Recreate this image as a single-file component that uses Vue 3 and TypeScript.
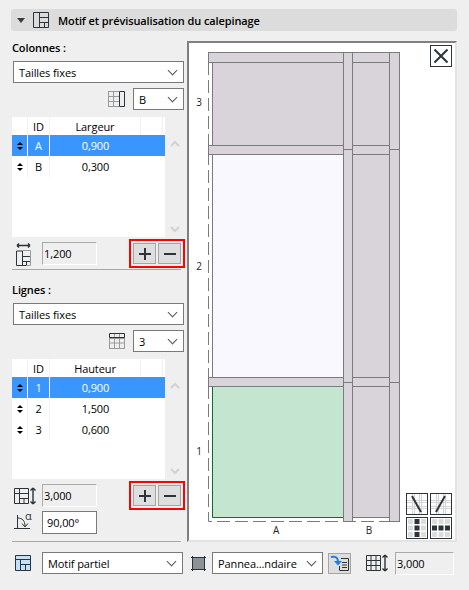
<template>
  <div class="page">
    <div class="head">
      <span class="tri"></span>
      <svg class="head-icon" width="16" height="16" viewBox="0 0 16 16">
        <path d="M.5.5h15v15H.5zM6.500.5v15M6.500 5.500h9M6.500 10.500h9M11.500 10.500v5" fill="none" stroke="#2b343a" />
      </svg>
      <b>Motif et prévisualisation du calepinage</b>
    </div>

    <div class="main">
      <div class="left">
        <section v-for="(s, i) in sections" :key="s.title" class="sec">
          <div v-if="i === 1" class="rule"></div>
          <div class="title">{{ s.title }}</div>
          <div class="select wide"><span>Tailles fixes</span><i class="chev"></i></div>
          <div class="count">
            <svg width="18" height="18" viewBox="0 0 18 18" fill="none">
              <path v-if="i === 0" d="M0 1.500h11M0 6.500h11M0 11.500h11M0 16.500h11M.500 1v16M5.500 1v16" stroke="#9a9a9a" />
              <path v-if="i === 0" d="M11.500 1.500h5v15h-5z" stroke="#2b343a" />
              <path v-if="i === 1" d="M1.500 6.500h15M1.500 11h15M1.500 16.500h15M1.500 2v15M6.500 2v15M11.500 2v15M16.500 2v15" stroke="#9a9a9a" />
              <path v-if="i === 1" d="M1.500 1.500h15v4h-15z" stroke="#2b343a" />
            </svg>
            <div class="select small"><span>{{ s.count }}</span><i class="chev"></i></div>
          </div>

          <div class="table">
            <div class="list">
              <div class="row header">
                <span></span><span>ID</span><span>{{ s.column }}</span><span></span>
              </div>
              <div v-for="(r, n) in s.rows" :key="r.id" class="row" :class="{ active: n === 0 }">
                <span class="updown"><i></i><i></i></span>
                <span>{{ r.id }}</span>
                <span>{{ r.value }}</span>
                <span></span>
              </div>
            </div>
            <div class="scroll">
              <svg width="10" height="7" viewBox="0 0 10 7"><path d="M1 6l4-4 4 4" fill="none" stroke="#d2d2d2" stroke-width="2" /></svg>
              <svg width="10" height="7" viewBox="0 0 10 7"><path d="M1 1l4 4 4-4" fill="none" stroke="#d2d2d2" stroke-width="2" /></svg>
            </div>
          </div>

          <div class="total">
            <svg v-if="i === 0" class="total-icon" width="16" height="24" viewBox="0 0 16 24" fill="none" stroke="#2b343a">
              <path d="M1 3.500h13M1 3.500l2-2M1 3.500l2 2M14 3.500l-2-2M14 3.500l-2 2" stroke-width="1.400" />
              <path d="M.5 9v14.500h10M.5 9h6M6.500 9v14.500M6.500 14.500h8M6.500 19.500h8M10.500 19.500v4" />
              <path d="M6.500 8.500h8v15h-4" stroke="#9a9a9a" />
            </svg>
            <svg v-else class="total-icon tall" width="24" height="18" viewBox="0 0 24 18" fill="none" stroke="#2b343a">
              <path d="M.5 1.500h14v15H.5zM.5 6.500h14M5.500 1.500v15M5.500 11.500h9M10 11.500v5" />
              <path d="M19 1v16M19 1l-2.500 2.500M19 1l2.500 2.500M19 17l-2.500-2.500M19 17l2.500-2.500" stroke-width="1.400" />
            </svg>
            <div class="readonly">{{ s.total }}</div>
            <div class="buttons">
              <button class="tool"><i class="plus"></i></button>
              <button class="tool"><i class="minus"></i></button>
            </div>
          </div>
        </section>

        <div class="angle">
          <svg width="24" height="20" viewBox="0 0 24 20" fill="none" stroke="#2b343a">
            <path d="M0 16.500h16M3.500 3v13.500M3.500 6c5 0 7.500 3 7.500 8" />
            <path d="M8 11.500l3 3.500 3-3.500" />
          </svg>
          <sup>α</sup>
          <div class="input">90,00°</div>
        </div>
        <div class="rule end"></div>
      </div>

      <div class="preview">
        <svg class="canvas" width="267" height="498" viewBox="189 43 267 498">
          <g stroke="#7b7b7b" stroke-width="1">
            <rect x="212.500" y="62.500" width="131" height="83" fill="#d8d4d9" />
            <rect x="352.500" y="62.500" width="37" height="455" fill="#d8d4d9" />
            <rect x="212.500" y="154.500" width="131" height="223" fill="#f9f8fe" />
            <rect x="212.500" y="386.500" width="131" height="131" fill="#c4e6d0" stroke="none" />
            <path d="M212.500 386v131.500H344" fill="none" stroke="#0f6b2e" />
            <path d="M208.500 62v459.500H389" fill="none" stroke-dasharray="13 5" />
            <rect x="208.500" y="52.500" width="191" height="10" fill="#d8d4d9" />
            <rect x="208.500" y="145.500" width="181" height="9" fill="#d8d4d9" />
            <rect x="208.500" y="377.500" width="181" height="9" fill="#d8d4d9" />
            <rect x="343.500" y="52.500" width="9" height="469" fill="#d8d4d9" />
            <rect x="389.500" y="52.500" width="10" height="469" fill="#d8d4d9" />
            <path d="M343.500 149.500h9M389.500 149.500h10M343.500 382.500h9M389.500 382.500h10" />
          </g>
          <g class="labels">
            <text x="199" y="106">3</text>
            <text x="199" y="270">2</text>
            <text x="199" y="455">1</text>
            <text x="276" y="534">A</text>
            <text x="369" y="534">B</text>
          </g>
        </svg>
        <button class="close">
          <svg width="20" height="20" viewBox="0 0 20 20"><path d="M3.500 3.500l13 13M16.500 3.500l-13 13" stroke="#2b343a" stroke-width="2" /></svg>
        </button>
        <div class="modes">
          <div v-for="m in modes" :key="m.name" class="mode">
            <svg width="20" height="20" viewBox="0 0 20 20">
              <template v-if="m.line">
                <path d="M0 6.500h20M0 8.500h20M0 12.500h20M0 14.500h20M5.500 0v20M7.500 0v20M12.500 0v20M14.500 0v20" stroke="#d4d4d4" />
                <path :d="m.line" stroke="#2b343a" stroke-width="2" fill="none" />
              </template>
              <template v-else>
                <rect
                  v-for="c in cells"
                  :key="c.key"
                  :x="c.x"
                  :y="c.y"
                  width="5"
                  height="5"
                  :fill="(m.name === 'col' ? c.col : c.row) === 1 ? '#2b343a' : '#dcdcdc'"
                />
              </template>
            </svg>
          </div>
        </div>
      </div>
    </div>

    <div class="foot">
      <svg class="foot-icon" width="18" height="18" viewBox="0 0 18 18">
        <path d="M1.500 1.500h15v15h-15z" fill="#c5defa" stroke="#2b343a" />
        <path d="M1.500 5.500h15M6.500 5.500v11M6.500 10.500h10M11.500 10.500v6" fill="none" stroke="#2b343a" />
      </svg>
      <div class="select motif"><span>Motif partiel</span><i class="chev"></i></div>
      <svg class="swatch" width="15" height="15" viewBox="0 0 15 15">
        <rect x="1.500" y="1.500" width="12" height="12" fill="#8c9296" stroke="#2b343a" />
        <path d="M0 1.500h15M0 13.500h15M1.500 0v15M13.500 0v15" stroke="#2b343a" />
      </svg>
      <div class="select panel"><span>Pannea...ndaire</span><i class="chev"></i></div>
      <button class="link">
        <svg width="20" height="18" viewBox="0 0 20 18" fill="none">
          <path d="M11 4.500h7.500v12h-9V12" stroke="#2b343a" />
          <path d="M12 8.500h5M12 11h5M12 13.500h5" stroke="#2b343a" />
          <path d="M1 3c4-1 7 0 7 5" stroke="#1e7fe0" stroke-width="2" />
          <path d="M4 7l4 4.500L12 7z" fill="#1e7fe0" />
        </svg>
      </button>
      <svg class="foot-grid" width="24" height="18" viewBox="0 0 24 18" fill="none" stroke="#2b343a">
        <path d="M.5 1.500h14v15H.5zM.5 6.500h14M.5 11.500h14M5 1.500v15M10 1.500v15" />
        <path d="M19 1v16M19 1l-2.500 2.500M19 1l2.500 2.500M19 17l-2.500-2.500M19 17l2.500-2.500" stroke-width="1.400" />
      </svg>
      <div class="readonly height">3,000</div>
    </div>
  </div>
</template>

<script setup lang="ts">
interface Row {
  id: string;
  value: string;
}

interface Section {
  title: string;
  count: string;
  column: string;
  total: string;
  rows: Row[];
}

const sections: Section[] = [
  {
    title: "Colonnes :",
    count: "B",
    column: "Largeur",
    total: "1,200",
    rows: [
      { id: "A", value: "0,900" },
      { id: "B", value: "0,300" },
    ],
  },
  {
    title: "Lignes :",
    count: "3",
    column: "Hauteur",
    total: "3,000",
    rows: [
      { id: "1", value: "0,900" },
      { id: "2", value: "1,500" },
      { id: "3", value: "0,600" },
    ],
  },
];

const modes = [
  { name: "down", line: "M5 2l9 16" },
  { name: "up", line: "M14 2l-9 16" },
  { name: "col", line: "" },
  { name: "row", line: "" },
];

// 3x3 swatch for the two lower mode buttons
const cells = [0, 1, 2].flatMap((r) =>
  [0, 1, 2].map((c) => ({
    key: r + "-" + c,
    x: 1 + c * 6.500,
    y: 1 + r * 6.500,
    col: c === 1 ? 1 : 0,
    row: r === 1 ? 1 : 0,
  }))
);
</script>

<style>
html,
body {
  margin: 0;
  background: #efefef;
}
</style>

<style scoped>
.page {
  width: 469px;
  height: 590px;
  box-sizing: border-box;
  padding-top: 9px;
  overflow: hidden;
  background: #efefef;
  color: #000;
  font-family: "Open Sans", "Noto Sans", sans-serif;
  font-size: 11px;
  letter-spacing: -0.1px;
}

.head {
  display: flex;
  align-items: center;
  height: 22px;
  margin: 0 12px 0 11px;
  background: #dcdcdc;
  border-radius: 3px;
}

.tri {
  width: 0;
  height: 0;
  margin-left: 6px;
  border: 4px solid transparent;
  border-top: 5px solid #3c3c3c;
  border-bottom: 0;
}

.head-icon {
  margin-left: 8px;
}

.head b {
  margin-left: 9px;
  font-weight: 600;
}

.main {
  display: flex;
  margin-top: 10px;
}

.left {
  width: 172px;
  margin-left: 12px;
}

.title {
  height: 13px;
  line-height: 13px;
  font-weight: 600;
}

.sec:first-child {
  padding-bottom: 4px;
}

.rule {
  width: 169px;
  height: 1px;
  margin-bottom: 13px;
  background: #a8a8a8;
}

.rule.end {
  margin: 7px 0 0;
}

.select {
  display: flex;
  align-items: center;
  justify-content: space-between;
  box-sizing: border-box;
  height: 22px;
  padding: 0 6px 0 5px;
  background: #fff;
  border: 1px solid #7a7a7a;
}

.wide {
  margin: 7px 0 0 1px;
}

.count {
  display: flex;
  align-items: center;
  justify-content: flex-end;
  gap: 7px;
  margin-top: 5px;
}

.small {
  width: 51px;
}

.chev {
  width: 6px;
  height: 6px;
  margin: -4px 1px 0 0;
  border-right: 1px solid #555;
  border-bottom: 1px solid #555;
  transform: rotate(45deg);
}

.table {
  display: flex;
  height: 120px;
  margin-top: 7px;
}

.list {
  width: 153px;
  background: #fff;
}

.row {
  display: grid;
  grid-template-columns: 16px 22px 91px 24px;
  height: 21px;
  align-items: center;
  text-align: center;
}

.row > span {
  display: flex;
  align-items: center;
  justify-content: center;
  height: 100%;
  box-sizing: border-box;
  border-right: 1px solid #f2f2f2;
}

.row:not(.header) > span:nth-child(3),
.row > span:last-child {
  border-right: 0;
}

.header {
  grid-template-columns: 16px 22px 91px 22px;
  height: 18px;
}

.header > span:last-child {
  border-right: 1px solid #f2f2f2;
}

.active {
  background: #3a96ff;
  color: #fff;
}

.active > span {
  border-right-color: #fff;
}

.updown {
  flex-direction: column;
  gap: 2px;
}

.updown i {
  width: 0;
  height: 0;
  border: 3px solid transparent;
  border-bottom: 3px solid #000;
  border-top: 0;
}

.updown i:last-child {
  border-top: 3px solid #000;
  border-bottom: 0;
}

.scroll {
  display: flex;
  flex-direction: column;
  justify-content: space-between;
  align-items: center;
  width: 19px;
  padding: 23px 0 4px;
  box-sizing: border-box;
}

.total {
  display: flex;
  align-items: center;
  height: 23px;
  margin-top: 5px;
}

.total-icon {
  flex: none;
  margin-left: 4px;
}

.total-icon.tall {
  margin-left: 2px;
}

.total-icon + .readonly {
  margin-left: 10px;
}

.total-icon.tall + .readonly {
  margin-left: 4px;
}

.readonly {
  flex: none;
  box-sizing: border-box;
  width: 55px;
  height: 23px;
  line-height: 21px;
  padding-left: 1px;
  border: 1px solid;
  border-color: #aaa #fff #fff #aaa;
}

.buttons {
  display: flex;
  gap: 2px;
  margin-left: 32px;
  padding: 2px;
  border: 2px solid #f00;
}

.tool {
  display: flex;
  align-items: center;
  justify-content: center;
  width: 23px;
  height: 21px;
  padding: 0;
  background: #dedede;
  border: 1px solid #a5a5a5;
}

.plus,
.minus {
  position: relative;
  width: 12px;
  height: 2px;
  background: #2b343a;
}

.plus::after {
  content: "";
  position: absolute;
  left: 5px;
  top: -5px;
  width: 2px;
  height: 12px;
  background: #2b343a;
}

.angle {
  position: relative;
  display: flex;
  align-items: center;
  height: 24px;
  margin-top: 3px;
  padding-left: 2px;
}

.angle sup {
  position: absolute;
  left: 13px;
  top: 0;
  font-size: 11px;
  line-height: 11px;
  color: #2b343a;
}

.input {
  box-sizing: border-box;
  width: 55px;
  height: 23px;
  margin-left: 4px;
  line-height: 21px;
  padding-left: 4px;
  background: #fff;
  border: 1px solid #7a7a7a;
}

.preview {
  position: relative;
  box-sizing: border-box;
  width: 270px;
  height: 501px;
  margin-left: 3px;
  background: #fff;
  border: 2px solid;
  border-color: #808080 #e3e3e3 #e3e3e3 #808080;
}

.canvas {
  display: block;
}

.labels text {
  font-size: 10px;
  text-anchor: middle;
  fill: #222;
}

.close {
  position: absolute;
  top: 2px;
  right: 3px;
  display: flex;
  align-items: center;
  justify-content: center;
  width: 22px;
  height: 22px;
  padding: 0;
  background: #fff;
  border: 1px solid #2b343a;
}

.modes {
  position: absolute;
  right: 3px;
  bottom: 1px;
  display: grid;
  grid-template-columns: 22px 22px;
  gap: 2px;
}

.mode {
  display: flex;
  box-sizing: border-box;
  width: 22px;
  height: 22px;
  background: #fff;
  border: 1px solid #2b343a;
}

.foot {
  display: flex;
  align-items: center;
  height: 22px;
  margin-top: 10px;
}

.foot-icon {
  margin-left: 14px;
}

.motif {
  width: 141px;
  margin-left: 10px;
}

.swatch {
  margin-left: 8px;
}

.panel {
  width: 111px;
  margin-left: 6px;
}

.link {
  display: flex;
  align-items: center;
  justify-content: center;
  width: 23px;
  height: 21px;
  margin-left: 5px;
  padding: 0;
  background: #dedede;
  border: 1px solid #a5a5a5;
}

.foot-grid {
  margin-left: 15px;
}

.readonly.height {
  width: 59px;
  margin-left: 5px;
}
</style>
